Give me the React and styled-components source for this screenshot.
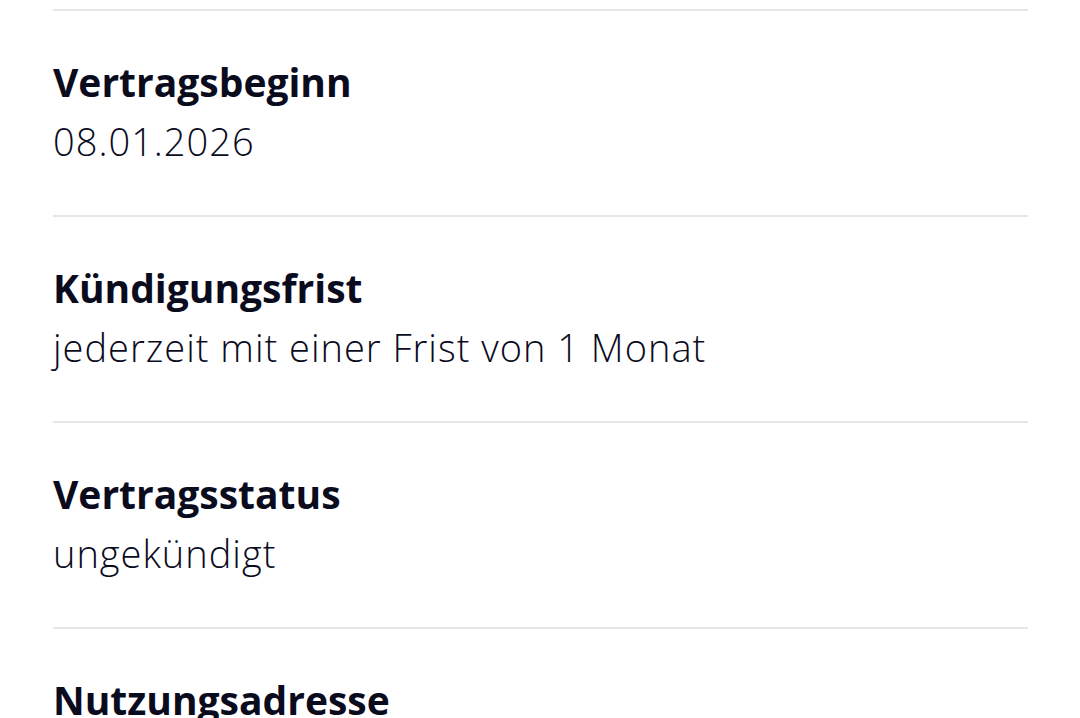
import React from 'react';
import styled, {createGlobalStyle} from 'styled-components';

const GlobalStyle = createGlobalStyle`
  html, body {
    margin: 0;
    padding: 0;
    background: #fff;
  }
  body {
    font-family: "Open Sans", "Noto Sans", sans-serif;
    color: #0b0b1e;
    overflow: hidden;
  }
`;

const items = [
  {label: 'Vertragsbeginn', value: '08.01.2026'},
  {label: 'Kündigungsfrist', value: 'jederzeit mit einer Frist von 1 Monat'},
  {label: 'Vertragsstatus', value: 'ungekündigt'},
  {label: 'Nutzungsadresse', value: ''},
];

const App = () => {
  return (
    <>
      <GlobalStyle />
      <ScList>
        {items.map((item) => (
          <ScItem key={item.label}>
            <ScLabel>{item.label}</ScLabel>
            {item.value && <ScValue>{item.value}</ScValue>}
          </ScItem>
        ))}
      </ScList>
    </>
  );
};

const ScList = styled.div`
  padding: 9px 52px 0 53px;
`;

const ScItem = styled.div`
  box-sizing: border-box;
  border-top: 2px solid #e6e6e6;
  height: 206px;
  padding-top: 46px;
`;

const ScLabel = styled.div`
  font-size: 39px;
  font-weight: 700;
  line-height: 50px;
`;

const ScValue = styled.div`
  font-size: 38px;
  font-weight: 350;
  line-height: 68px;
  letter-spacing: 1px;
`;

export default App;
